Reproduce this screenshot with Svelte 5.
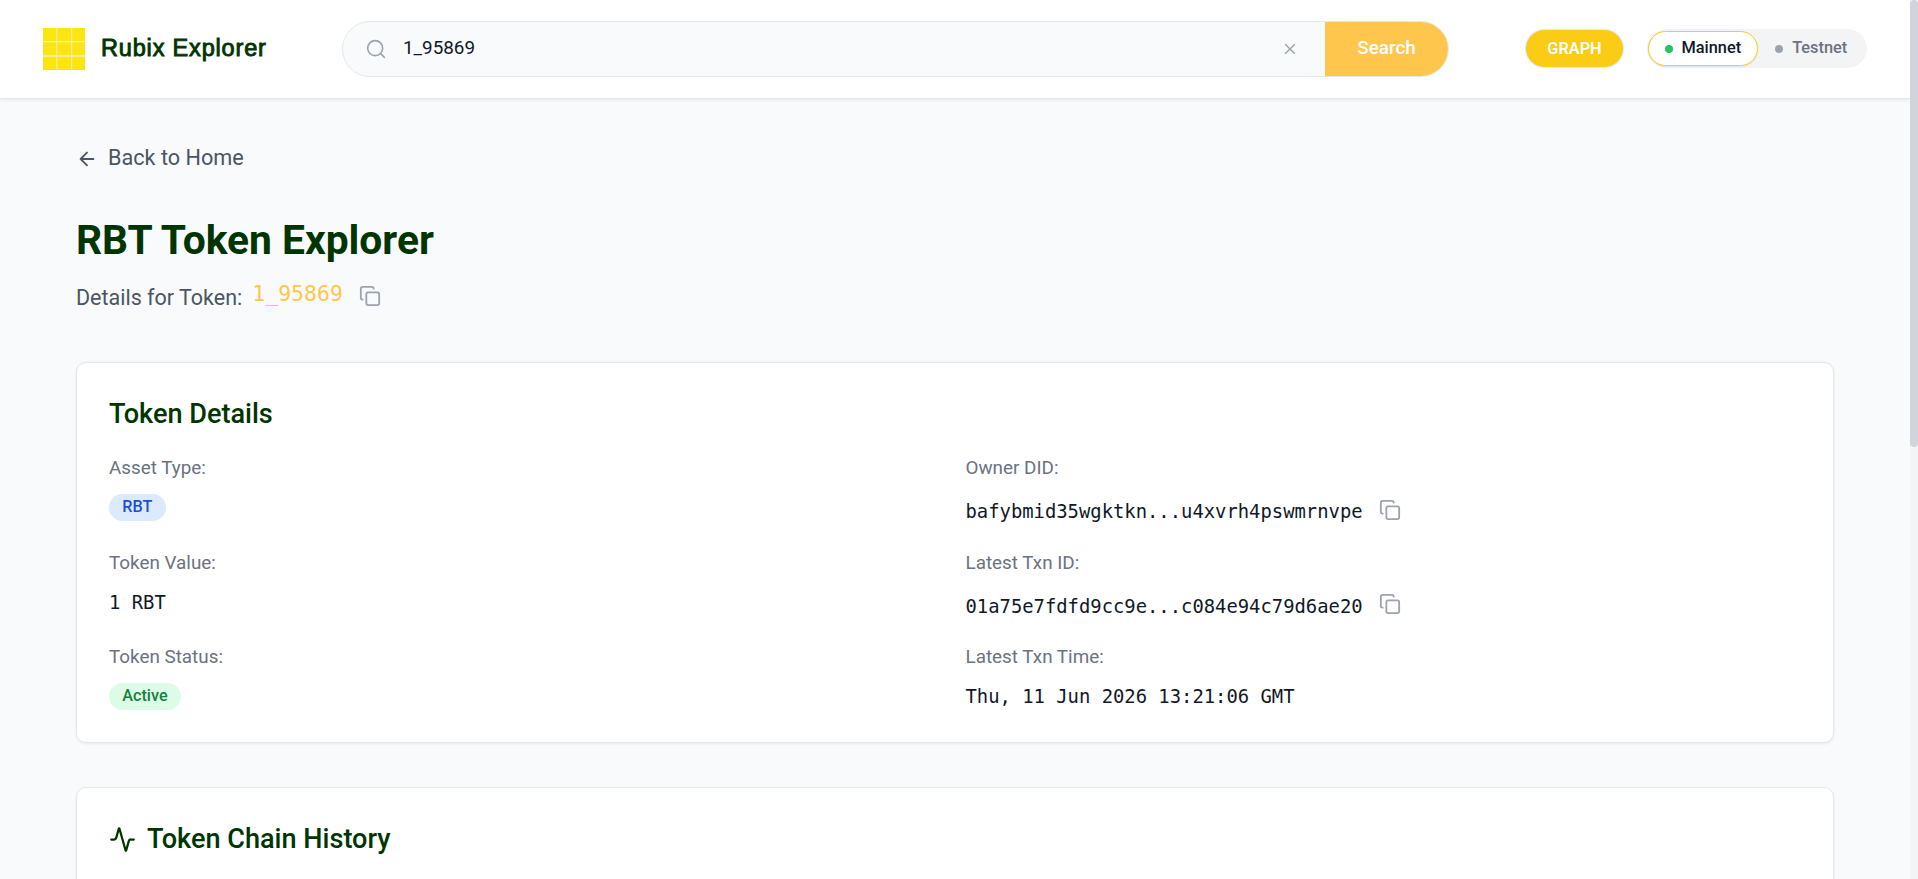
<script>
  let query = $state('1_95869');
  let network = $state('Mainnet');

  const columns = [
    [
      { label: 'Asset Type:', value: 'RBT', kind: 'blue' },
      { label: 'Token Value:', value: '1 RBT', kind: 'mono' },
      { label: 'Token Status:', value: 'Active', kind: 'green' }
    ],
    [
      { label: 'Owner DID:', value: 'bafybmid35wgktkn...u4xvrh4pswmrnvpe', kind: 'copy' },
      { label: 'Latest Txn ID:', value: '01a75e7fdfd9cc9e...c084e94c79d6ae20', kind: 'copy' },
      { label: 'Latest Txn Time:', value: 'Thu, 11 Jun 2026 13:21:06 GMT', kind: 'mono' }
    ]
  ];
</script>

{#snippet copyIcon()}
  <button class="copy" aria-label="Copy">
    <svg width="22" height="22" viewBox="0 0 24 24" fill="none" stroke="currentColor" stroke-width="2" stroke-linecap="round" stroke-linejoin="round">
      <rect x="8" y="8" width="14" height="14" rx="2" />
      <path d="M4 16c-1.1 0-2-.9-2-2V4c0-1.1.9-2 2-2h10c1.1 0 2 .9 2 2" />
    </svg>
  </button>
{/snippet}

<div class="page">
  <div class="content">
    <header>
      <div class="brand">
        <svg width="42" height="42" viewBox="0 0 42 42">
          <rect width="42" height="42" fill="#fbe612" />
          <path d="M13.8 0v42M28.6 0v42" stroke="#f3ecb0" stroke-width="1.2" />
          <path d="M0 13.6h42M0 28h42" stroke="#f4eecb" stroke-width="1.3" />
          <path d="M0 41.6h42" stroke="#e0d878" stroke-width=".8" />
        </svg>
        <span>Rubix Explorer</span>
      </div>

      <div class="search">
        <svg class="lens" width="20" height="20" viewBox="0 0 24 24" fill="none" stroke="currentColor" stroke-width="2" stroke-linecap="round" stroke-linejoin="round">
          <circle cx="11" cy="11" r="9" />
          <path d="m22 22-4.6-4.6" />
        </svg>
        <input type="text" bind:value={query} aria-label="Search" />
        <button class="clear" aria-label="Clear" onclick={() => (query = '')}>
          <svg width="12" height="12" viewBox="0 0 12 12" fill="none" stroke="currentColor" stroke-width="1.4">
            <path d="M1.2 1.2l9.6 9.6M10.8 1.2l-9.6 9.6" />
          </svg>
        </button>
        <button class="go">Search</button>
      </div>

      <button class="graph">GRAPH</button>
      <div class="networks">
        {#each ['Mainnet', 'Testnet'] as name}
          <button class:active={network === name} onclick={() => (network = name)}>
            <i></i><span>{name}</span>
          </button>
        {/each}
      </div>
    </header>

    <main>
      <a class="back" href="#home">
        <svg width="22" height="22" viewBox="0 0 24 24" fill="none" stroke="currentColor" stroke-width="2" stroke-linecap="round" stroke-linejoin="round">
          <path d="m12 19-7-7 7-7M19 12H5" />
        </svg>
        <span>Back to Home</span>
      </a>

      <h1>RBT Token Explorer</h1>
      <div class="subtitle">
        <span class="lead">Details for Token:</span>
        <span class="token">1_95869</span>
        {@render copyIcon()}
      </div>

      <section class="card details">
        <h2>Token Details</h2>
        <div class="grid">
          {#each columns as fields}
            <div class="column">
              {#each fields as field}
                <div class="field">
                  <div class="label">{field.label}</div>
                  {#if field.kind === 'mono'}
                    <div class="value">{field.value}</div>
                  {:else if field.kind === 'copy'}
                    <div class="value with-copy"><span>{field.value}</span>{@render copyIcon()}</div>
                  {:else}
                    <div class="value"><span class="pill {field.kind}">{field.value}</span></div>
                  {/if}
                </div>
              {/each}
            </div>
          {/each}
        </div>
      </section>

      <section class="card history">
        <h2>
          <svg width="27" height="27" viewBox="0 0 24 24" fill="none" stroke="currentColor" stroke-width="2" stroke-linecap="round" stroke-linejoin="round">
            <path d="M22 12h-2.480a2 2 0 0 0-1.930 1.460l-2.350 8.360a.25.25 0 0 1-.48 0L9.240 2.180a.25.25 0 0 0-.48 0l-2.350 8.360A2 2 0 0 1 4.490 12H2" />
          </svg>
          <span>Token Chain History</span>
        </h2>
      </section>
    </main>
  </div>
  <div class="scrollbar"><div class="thumb"></div></div>
</div>

<style>
  :global(body) {
    margin: 0;
    overflow: hidden;
  }
  .page {
    display: flex;
    height: 879px;
    overflow: hidden;
    background: #f9fafb;
    font-family: Roboto, sans-serif;
    font-size: 18.85px;
    color: #111827;
  }
  .page * {
    box-sizing: border-box;
  }
  .content {
    flex: 1;
    min-width: 0;
  }
  button {
    font: inherit;
    border: 0;
    padding: 0;
    background: none;
    color: inherit;
  }
  svg {
    display: block;
    flex: none;
  }
  header {
    display: flex;
    align-items: center;
    height: 99px;
    padding: 0 43px;
    background: #fff;
    border-bottom: 1px solid #e5e7eb;
    box-shadow: 0 1px 3px rgba(0, 0, 0, 0.08);
  }
  .brand {
    display: flex;
    align-items: center;
    gap: 16px;
    width: 299px;
    color: #003500;
    font: 400 23.5px/30px "Liberation Sans", sans-serif;
    letter-spacing: 0.83px;
    -webkit-text-stroke: 0.9px #003500;
    white-space: nowrap;
  }
  .brand span {
    margin-top: -2px;
  }
  .search {
    display: flex;
    align-items: center;
    width: 1107px;
    height: 56px;
    border: 1px solid #e5e7eb;
    border-radius: 28px;
    background: #f9fafb;
    overflow: hidden;
  }
  .lens {
    margin: 0 0 0 22.500px;
    color: #9ca3af;
  }
  input {
    flex: 1;
    min-width: 0;
    border: 0;
    outline: 0;
    padding: 0 0 3px 17.500px;
    background: transparent;
    color: #111827;
    font: 400 18.85px Roboto, sans-serif;
  }
  .clear {
    margin-right: 29px;
    color: #9ca3af;
  }
  .go {
    width: 123px;
    height: 54px;
    padding-bottom: 3px;
    background: #ffc64d;
    color: #fff;
    font-weight: 500;
  }
  .graph {
    width: 97px;
    height: 37px;
    margin: -1px 0 0 77px;
    padding-bottom: 1px;
    border-radius: 19px;
    background: #facc15;
    color: #fff;
    font-size: 16.300px;
    font-weight: 600;
    box-shadow: 0 0 1px 1px #e5e7eb;
  }
  .networks {
    display: flex;
    align-items: center;
    width: 220px;
    height: 39px;
    margin: -1px 0 0 23.500px;
    padding: 0 1px;
    border-radius: 20px;
    background: #f3f4f6;
    color: #6b7280;
    font-size: 16.350px;
    font-weight: 500;
  }
  .networks button {
    display: flex;
    align-items: center;
    gap: 9px;
    height: 35px;
    padding: 0 16px;
    border: 1px solid transparent;
    border-radius: 18px;
  }
  .networks span {
    margin-top: -2px;
  }
  .networks i {
    width: 8px;
    height: 8px;
    border-radius: 50%;
    background: #9ca3af;
  }
  .networks .active {
    border-color: #facc15;
    background: #fff;
    color: #111827;
    box-shadow: 0 1px 2px rgba(0, 0, 0, 0.08);
  }
  .networks .active i {
    background: #22c55e;
  }
  main {
    padding: 44px 76px 0;
  }
  .back {
    display: flex;
    align-items: center;
    gap: 10px;
    height: 32px;
    color: #4b5563;
    font-size: 21.650px;
    line-height: 32px;
    text-decoration: none;
  }
  .back span {
    margin-top: -2px;
  }
  h1 {
    margin: 41px 0 0;
    color: #003500;
    font-size: 40.750px;
    line-height: 48px;
    font-weight: 700;
  }
  .subtitle {
    display: flex;
    height: 34px;
    margin-top: 15px;
    color: #4b5563;
    font-size: 21.500px;
    line-height: 32px;
  }
  .lead {
    margin-top: 3px;
  }
  .token {
    margin: -1px 16px 0 10px;
    color: #ffc64d;
    font-family: "DejaVu Sans Mono", monospace;
  }
  .copy {
    align-self: flex-start;
    margin-top: 6px;
    color: #9ca3af;
  }
  .card {
    border: 1px solid #e5e7eb;
    border-radius: 10px;
    background: #fff;
    box-shadow: 0 1px 3px rgba(0, 0, 0, 0.07);
  }
  .details {
    height: 381px;
    margin-top: 49px;
    padding: 33px 32px 0;
  }
  h2 {
    display: flex;
    align-items: center;
    gap: 11px;
    margin: 0;
    color: #003500;
    font-size: 27.100px;
    line-height: 36px;
    font-weight: 500;
  }
  .grid {
    display: grid;
    grid-template-columns: 1fr 1fr;
    column-gap: 21px;
    margin-top: 22px;
  }
  .field {
    height: 94.500px;
  }
  .label {
    color: #6b7280;
    line-height: 28px;
  }
  .value {
    height: 28px;
    margin-top: 12px;
    font-family: "DejaVu Sans Mono", monospace;
    line-height: 27px;
    white-space: nowrap;
  }
  .with-copy {
    display: flex;
    gap: 16px;
  }
  .with-copy span {
    margin-top: 4px;
  }
  .with-copy .copy {
    margin-top: 4.500px;
  }
  .pill {
    display: block;
    width: fit-content;
    height: 27px;
    padding: 0 13.300px;
    border-radius: 14px;
    font: 500 16.200px/25px Roboto, sans-serif;
  }
  .blue {
    background: #dbeafe;
    color: #1d4ed8;
  }
  .green {
    background: #dcfce7;
    color: #15803d;
  }
  .history {
    height: 300px;
    margin-top: 44px;
    padding: 33px 32px 0;
  }
  .scrollbar {
    width: 8px;
    height: 879px;
    background: #f3f4f6;
  }
  .thumb {
    height: 447px;
    border-radius: 4px;
    background: #d1d5db;
  }
</style>
